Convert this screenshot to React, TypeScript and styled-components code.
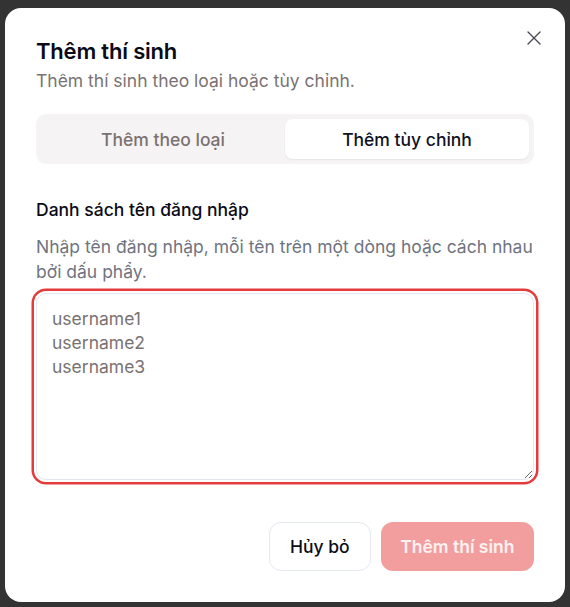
import React from "react";
import styled, { createGlobalStyle } from "styled-components";
import { X } from "lucide-react";

const Global = createGlobalStyle`
  html, body { margin: 0; padding: 0; }
  body {
    background: #333333;
    font-family: Inter, "Noto Sans", sans-serif;
    -webkit-font-smoothing: antialiased;
  }
  * { box-sizing: border-box; }
`;

const Screen = styled.div`
  width: 570px;
  height: 607px;
  padding: 8px 5px 5px 5px;
  display: flex;
  align-items: flex-start;
`;

const Dialog = styled.div`
  position: relative;
  width: 560px;
  height: 594px;
  background: #ffffff;
  border-radius: 16px;
  padding: 31px 31px 31px 31px;
  display: flex;
  flex-direction: column;
`;

const CloseButton = styled.button`
  position: absolute;
  top: 18px;
  right: 19px;
  width: 24px;
  height: 24px;
  border: none;
  background: transparent;
  padding: 0;
  display: flex;
  align-items: center;
  justify-content: center;
  color: #4a4a55;
  cursor: pointer;
`;

const Title = styled.h2`
  margin: 0;
  font-size: 22px;
  line-height: 24px;
  font-weight: 600;
  color: #0b0b18;
  letter-spacing: -0.2px;
`;

const Subtitle = styled.p`
  margin: 6px 0 0 0;
  font-size: 17.5px;
  line-height: 24px;
  color: #7a7272;
`;

const Tabs = styled.div`
  margin-top: 21px;
  height: 50px;
  background: #f5f3f3;
  border-radius: 10px;
  padding: 5px;
  display: grid;
  grid-template-columns: 1fr 1fr;
`;

const Tab = styled.div<{ $active?: boolean }>`
  display: flex;
  align-items: center;
  justify-content: center;
  border-radius: 8px;
  font-size: 17.5px;
  font-weight: 500;
  color: ${(p) => (p.$active ? "#0f1222" : "#7b7171")};
  background: ${(p) => (p.$active ? "#ffffff" : "transparent")};
  box-shadow: ${(p) => (p.$active ? "0 1px 2px rgba(0,0,0,0.06)" : "none")};
`;

const Field = styled.div`
  margin-top: 34px;
  display: flex;
  flex-direction: column;
`;

const Label = styled.label`
  font-size: 17.5px;
  line-height: 24px;
  font-weight: 500;
  color: #0b0b18;
`;

const Hint = styled.p`
  margin: 12px 0 0 0;
  font-size: 17.5px;
  line-height: 25px;
  color: #6f7480;
`;

const TextArea = styled.textarea`
  margin-top: 9px;
  width: 100%;
  height: 187px;
  border: 1px solid #e2e6ee;
  border-radius: 10px;
  padding: 13px 15px;
  font-family: Inter, "Noto Sans", sans-serif;
  font-size: 17.5px;
  line-height: 24px;
  color: #1a1a1a;
  outline: none;
  box-shadow: 0 0 0 2px #ffffff, 0 0 0 4.5px #e43b3b;
  resize: vertical;
  &::placeholder {
    color: #7a7272;
  }
`;

const Footer = styled.div`
  margin-top: auto;
  display: flex;
  justify-content: flex-end;
  gap: 10px;
`;

const Button = styled.button<{ $primary?: boolean }>`
  height: 49px;
  padding: 0 ${(p) => (p.$primary ? "18.5px" : "20px")};
  border-radius: 12px;
  font-family: Inter, "Noto Sans", sans-serif;
  font-size: 17.5px;
  font-weight: ${(p) => (p.$primary ? 600 : 500)};
  border: 1px solid ${(p) => (p.$primary ? "transparent" : "#e4e8ef")};
  background: ${(p) => (p.$primary ? "#f29e9e" : "#ffffff")};
  color: ${(p) => (p.$primary ? "#fdf1f1" : "#0b0b18")};
  cursor: pointer;
`;

export default function App() {
  return (
    <>
      <Global />
      <Screen>
        <Dialog>
          <CloseButton aria-label="Đóng">
            <X size={24} strokeWidth={1.4} />
          </CloseButton>
          <Title>Thêm thí sinh</Title>
          <Subtitle>Thêm thí sinh theo loại hoặc tùy chỉnh.</Subtitle>
          <Tabs>
            <Tab>Thêm theo loại</Tab>
            <Tab $active>Thêm tùy chỉnh</Tab>
          </Tabs>
          <Field>
            <Label>Danh sách tên đăng nhập</Label>
            <Hint>
              Nhập tên đăng nhập, mỗi tên trên một dòng hoặc cách nhau bởi dấu phẩy.
            </Hint>
            <TextArea placeholder={"username1\nusername2\nusername3"} />
          </Field>
          <Footer>
            <Button>Hủy bỏ</Button>
            <Button $primary>Thêm thí sinh</Button>
          </Footer>
        </Dialog>
      </Screen>
    </>
  );
}
